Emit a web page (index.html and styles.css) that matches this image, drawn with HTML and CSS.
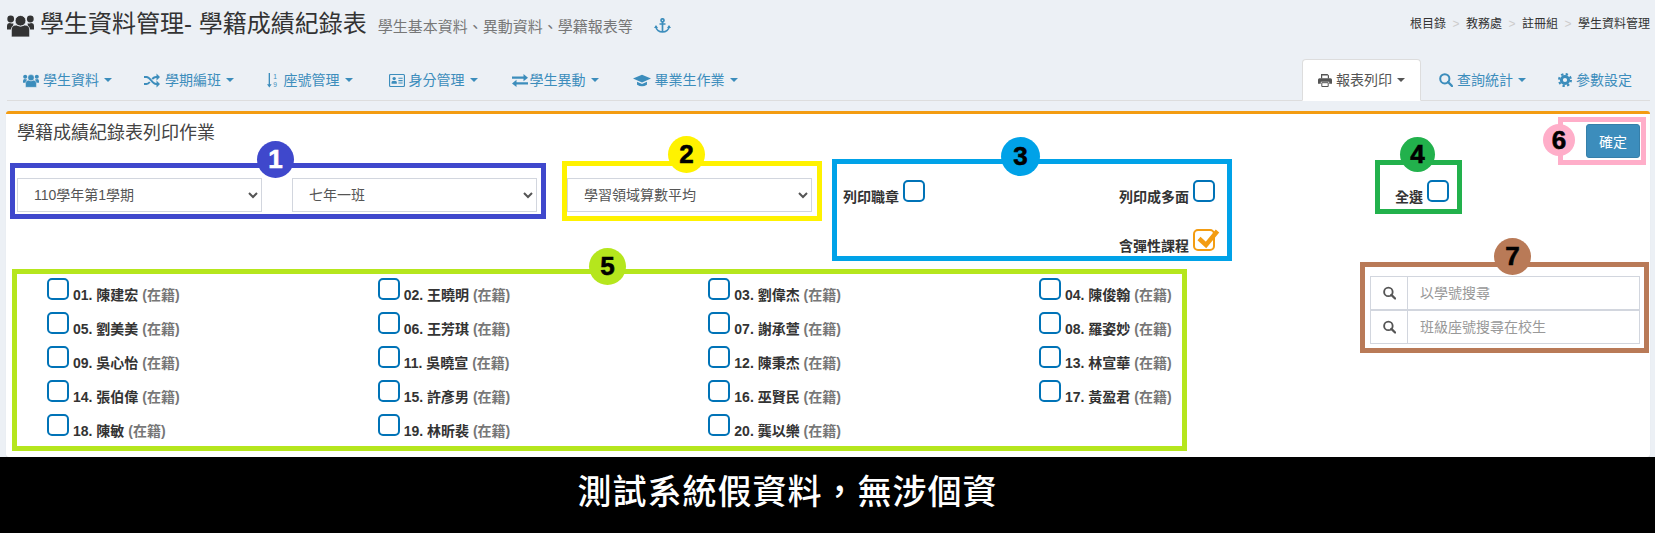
FILE: index.html
```html
<!DOCTYPE html>
<html lang="zh-Hant">
<head>
    <meta charset="UTF-8">
    <title>學生資料管理- 學籍成績紀錄表</title>
    <link rel="stylesheet" href="styles.css">
</head>
<body>
    <svg class="sprite" aria-hidden="true">
        <symbol id="i-users" viewBox="0 0 27 23">
            <circle cx="3.700" cy="5" r="3.400"/><circle cx="23.300" cy="5" r="3.400"/>
            <path d="M0 15.500v-3.300Q0 9 3 9q1.700.8 3.500.4Q6 11 6 13v2.500zM27 15.500v-3.300Q27 9 24 9q-1.700.8-3.500.4.500 1.600.500 3.600v2.500z"/>
            <g stroke="#ecf0f5" stroke-width=".8">
                <circle cx="13.500" cy="6.800" r="5.400"/>
                <path d="M4.300 23v-7q0-5 5-5 4.200 2.500 8.400 0 5 0 5 5v7z"/>
            </g>
        </symbol>
        <symbol id="i-random" viewBox="0 0 16 14">
            <path d="M0 3.500h2.500c4 0 5.500 7 9.500 7h1M0 10.500h2.500c1.500 0 2.500-1 3.300-2M8.200 5.500c1-1 2.200-2 3.800-2h1" fill="none" stroke="currentColor" stroke-width="2"/>
            <path d="M12.500 0l3.500 3.500-3.500 3.500zM12.500 7l3.500 3.500-3.500 3.500z"/>
        </symbol>
        <symbol id="i-sort" viewBox="0 0 14 18">
            <path d="M2.400 0h1.600v13.500h2L3.200 17.500.4 13.500h2z"/>
            <text x="8" y="7" class="sort-digit">1</text><text x="8" y="17" class="sort-digit">9</text>
        </symbol>
        <symbol id="i-card" viewBox="0 0 17 14">
            <rect x=".6" y=".6" width="15.800" height="12.800" rx="1" fill="none" stroke="currentColor" stroke-width="1.200"/>
            <circle cx="5.500" cy="5" r="1.800"/><path d="M2.700 10.500V9q0-1.500 1.500-1.500h2.600Q8.300 7.500 8.300 9v1.500z"/>
            <path d="M10 4h4.500v1.200H10zM10 6.500h4.500v1.200H10zM10 9h4.500v1.200H10z"/>
        </symbol>
        <symbol id="i-exchange" viewBox="0 0 16 14">
            <path d="M0 3h11.500V.5L16 4.200l-4.500 3.600V5.300H0zM16 8.700H4.500V6.200L0 9.900l4.500 3.600V11H16z"/>
        </symbol>
        <symbol id="i-cap" viewBox="0 0 20 15">
            <path d="M10 1l10 4.300L10 9.600 0 5.300z"/><path d="M4.500 9v3.200q5.500 3.600 11 0V9L10 11.400z"/>
        </symbol>
        <symbol id="i-print" viewBox="0 0 14 13">
            <path d="M3 5V.6h6.500L11 2v3H9.800V2H4.200v3z"/>
            <path d="M1.500 4.800h11Q14 4.800 14 6.300v4h-2.800V8.200H2.800v2.100H0v-4Q0 4.800 1.500 4.800z"/>
            <path d="M3.800 9.200h6.400V13H3.800z" fill="none" stroke="currentColor" stroke-width="1"/>
        </symbol>
        <symbol id="i-search" viewBox="0 0 14 14">
            <circle cx="5.800" cy="5.800" r="4.600" fill="none" stroke="currentColor" stroke-width="2"/>
            <path d="M9 9l4 4" fill="none" stroke="currentColor" stroke-width="2.400" stroke-linecap="round"/>
        </symbol>
        <symbol id="i-cog" viewBox="0 0 14 14">
            <circle cx="7" cy="7" r="3.600" fill="none" stroke="currentColor" stroke-width="3"/>
            <circle cx="7" cy="7" r="5.900" fill="none" stroke="currentColor" stroke-width="2.200" stroke-dasharray="2.300 2.330"/>
        </symbol>
        <symbol id="i-anchor" viewBox="0 0 17 15">
            <g fill="none" stroke="currentColor" stroke-width="1.700">
                <circle cx="8.500" cy="2.300" r="1.500"/><path d="M8.500 4v10M5.500 6h6M2 8.500c0 3.500 3.500 5.300 6.500 5.500 3-.2 6.500-2 6.500-5.500"/>
            </g>
            <path d="M0 10l2-3 2 3zM13 10l2-3 2 3z"/>
        </symbol>
    </svg>

    <div class="page">
        <header class="page-head">
            <h1 class="page-title">
                <svg class="title-icon"><use href="#i-users"/></svg>
                學生資料管理- 學籍成績紀錄表
                <small>學生基本資料、異動資料、學籍報表等</small>
                <svg class="anchor-icon"><use href="#i-anchor"/></svg>
            </h1>
            <ol class="breadcrumb">
                <li>根目錄</li>
                <li>教務處</li>
                <li>註冊組</li>
                <li>學生資料管理</li>
            </ol>
        </header>

        <nav class="tabs">
            <a class="tab"><svg class="ico"><use href="#i-users"/></svg>學生資料<i class="caret"></i></a>
            <a class="tab"><svg class="ico ico-random"><use href="#i-random"/></svg>學期編班<i class="caret"></i></a>
            <a class="tab"><svg class="ico ico-sort"><use href="#i-sort"/></svg>座號管理<i class="caret"></i></a>
            <a class="tab"><svg class="ico ico-card"><use href="#i-card"/></svg>身分管理<i class="caret"></i></a>
            <a class="tab"><svg class="ico ico-exchange"><use href="#i-exchange"/></svg>學生異動<i class="caret"></i></a>
            <a class="tab"><svg class="ico ico-cap"><use href="#i-cap"/></svg>畢業生作業<i class="caret"></i></a>
            <a class="tab tab-active"><svg class="ico ico-small"><use href="#i-print"/></svg>報表列印<i class="caret"></i></a>
            <a class="tab"><svg class="ico ico-small"><use href="#i-search"/></svg>查詢統計<i class="caret"></i></a>
            <a class="tab"><svg class="ico ico-small"><use href="#i-cog"/></svg>參數設定</a>
        </nav>

        <main class="panel">
            <div class="panel-head">
                <h3 class="panel-title">學籍成績紀錄表列印作業</h3>
                <button class="btn-ok">確定</button>
            </div>

            <div class="form-row">
                <select class="field">
                    <option>110學年第1學期</option>
                </select>
                <select class="field">
                    <option>七年一班</option>
                </select>
                <select class="field">
                    <option>學習領域算數平均</option>
                </select>

                <div class="options">
                    <label class="check-label"><span>列印職章</span><input type="checkbox" class="check"></label>
                    <label class="check-label opt-right"><span>列印成多面</span><input type="checkbox" class="check"></label>
                    <label class="check-label opt-third"><span>含彈性課程</span>
                        <span class="check-wrap">
                            <input type="checkbox" class="check check-orange" checked>
                            <svg class="tick" viewBox="0 0 28 22"><path d="M6 9.500l7 6.500L24.500 2"/></svg>
                        </span>
                    </label>
                </div>

                <label class="check-label select-all"><span>全選</span><input type="checkbox" class="check"></label>
            </div>

            <div class="bottom-row">
                <div class="students">
                    <label class="check-label"><input type="checkbox" class="check"><span>01. 陳建宏 <em>(在籍)</em></span></label>
                    <label class="check-label"><input type="checkbox" class="check"><span>02. 王曉明 <em>(在籍)</em></span></label>
                    <label class="check-label"><input type="checkbox" class="check"><span>03. 劉偉杰 <em>(在籍)</em></span></label>
                    <label class="check-label"><input type="checkbox" class="check"><span>04. 陳俊翰 <em>(在籍)</em></span></label>
                    <label class="check-label"><input type="checkbox" class="check"><span>05. 劉美美 <em>(在籍)</em></span></label>
                    <label class="check-label"><input type="checkbox" class="check"><span>06. 王芳琪 <em>(在籍)</em></span></label>
                    <label class="check-label"><input type="checkbox" class="check"><span>07. 謝承萱 <em>(在籍)</em></span></label>
                    <label class="check-label"><input type="checkbox" class="check"><span>08. 羅姿妙 <em>(在籍)</em></span></label>
                    <label class="check-label"><input type="checkbox" class="check"><span>09. 吳心怡 <em>(在籍)</em></span></label>
                    <label class="check-label"><input type="checkbox" class="check"><span>11. 吳曉宣 <em>(在籍)</em></span></label>
                    <label class="check-label"><input type="checkbox" class="check"><span>12. 陳秉杰 <em>(在籍)</em></span></label>
                    <label class="check-label"><input type="checkbox" class="check"><span>13. 林宣華 <em>(在籍)</em></span></label>
                    <label class="check-label"><input type="checkbox" class="check"><span>14. 張伯偉 <em>(在籍)</em></span></label>
                    <label class="check-label"><input type="checkbox" class="check"><span>15. 許彥男 <em>(在籍)</em></span></label>
                    <label class="check-label"><input type="checkbox" class="check"><span>16. 巫賢民 <em>(在籍)</em></span></label>
                    <label class="check-label"><input type="checkbox" class="check"><span>17. 黃盈君 <em>(在籍)</em></span></label>
                    <label class="check-label"><input type="checkbox" class="check"><span>18. 陳敏 <em>(在籍)</em></span></label>
                    <label class="check-label"><input type="checkbox" class="check"><span>19. 林昕裴 <em>(在籍)</em></span></label>
                    <label class="check-label"><input type="checkbox" class="check"><span>20. 龔以樂 <em>(在籍)</em></span></label>
                </div>

                <div class="search">
                    <div class="search-row">
                        <span class="search-addon"><svg><use href="#i-search"/></svg></span>
                        <input type="text" placeholder="以學號搜尋">
                    </div>
                    <div class="search-row">
                        <span class="search-addon"><svg><use href="#i-search"/></svg></span>
                        <input type="text" placeholder="班級座號搜尋在校生">
                    </div>
                </div>
            </div>
        </main>

        <footer class="notice">測試系統假資料，無涉個資</footer>

        <!-- 說明用的標註框 -->
        <div class="mark mark-1"></div><b class="badge badge-1">1</b>
        <div class="mark mark-2"></div><b class="badge badge-2">2</b>
        <div class="mark mark-3"></div><b class="badge badge-3">3</b>
        <div class="mark mark-4"></div><b class="badge badge-4">4</b>
        <div class="mark mark-5"></div><b class="badge badge-5">5</b>
        <div class="mark mark-6"></div><b class="badge badge-6">6</b>
        <div class="mark mark-7"></div><b class="badge badge-7">7</b>
    </div>
</body>
</html>
```

FILE: styles.css
```css
* {
    box-sizing: border-box;
}

body {
    margin: 0;
    font-family: "Liberation Sans", "Noto Sans CJK TC", sans-serif;
    font-size: 14px;
    color: #333;
    background-color: #ecf0f5;
}

.sprite {
    display: none;
}

.sort-digit {
    font-size: 8px;
    font-family: "Liberation Sans", sans-serif;
}

.page {
    position: relative;
    display: flex;
    flex-direction: column;
    height: 533px;
    overflow: hidden;
}

/* header */
.page-head {
    display: flex;
    justify-content: space-between;
    align-items: flex-start;
    height: 59px;
    padding: 9px 5px 0 7px;
}

.page-title {
    display: flex;
    align-items: baseline;
    margin: 0;
    font-size: 24px;
    font-weight: normal;
    line-height: 30px;
    white-space: nowrap;
}

.page-title small {
    margin-left: 11px;
    font-size: 15px;
    color: #777;
}

.title-icon {
    width: 27px;
    height: 23px;
    margin-right: 6px;
    fill: #333;
    align-self: center;
}

.anchor-icon {
    width: 17px;
    height: 15px;
    margin-left: 21px;
    fill: #3c8dbc;
    color: #3c8dbc;
    align-self: center;
}

.breadcrumb {
    display: flex;
    margin: 7px 0 0;
    padding: 0;
    list-style: none;
    font-size: 12px;
    line-height: 17px;
}

.breadcrumb li + li::before {
    content: ">";
    padding: 0 6.500px;
    color: #ccc;
}

/* tabs */
.tabs {
    display: flex;
    height: 42px;
    margin: 0 5px 10px 7px;
    border-bottom: 1px solid #ddd;
}

.tab {
    display: flex;
    align-items: center;
    height: 42px;
    padding: 10px 15px;
    border: 1px solid transparent;
    border-radius: 4px 4px 0 0;
    color: #3c8dbc;
    line-height: 20px;
}

.tab-active {
    margin: 0 2px 0 auto;
    background-color: #fff;
    border-color: #ddd #ddd #fff;
    color: #555;
}

.tab:last-child {
    margin-right: 2px;
}

.ico {
    width: 16px;
    height: 15px;
    margin-right: 4px;
    fill: currentColor;
}

.ico-random {
    margin-right: 5px;
}

.ico-sort {
    width: 13px;
    margin-right: 4.500px;
}

.ico-card {
    margin-left: 4px;
}

.ico-exchange {
    margin: 0 2px;
}

.ico-cap {
    width: 18px;
    margin: 0 4px 0 2px;
}

.ico-small {
    width: 14px;
    height: 14px;
}

.caret {
    width: 0;
    height: 0;
    margin-left: 5px;
    border-top: 4px solid currentColor;
    border-left: 4px solid transparent;
    border-right: 4px solid transparent;
}

/* panel */
.panel {
    flex: 1;
    margin: 0 5px 0 6px;
    background-color: #fff;
    border-top: 3px solid #f39c12;
    border-radius: 3px;
    box-shadow: 0 1px 1px rgba(0, 0, 0, 0.1);
}

.panel-head {
    display: flex;
    justify-content: space-between;
    align-items: flex-start;
    padding: 10px 10px 0 11px;
}

.panel-title {
    margin: -1px 0 0;
    font-size: 18px;
    font-weight: normal;
    line-height: 20px;
    color: #444;
}

.btn-ok {
    width: 54px;
    height: 34px;
    font: inherit;
    color: #fff;
    background-color: #3c8dbc;
    border: 1px solid #367fa9;
    border-radius: 3px;
}

.form-row {
    display: flex;
    align-items: flex-start;
    gap: 30px;
    margin-top: 20px;
    padding-left: 11px;
}

.field {
    width: 245px;
    height: 34px;
    padding: 6px 12px;
    font: inherit;
    color: #555;
    background-color: #fff;
    border: 1px solid #d2d6de;
    border-radius: 0;
}

.options {
    display: grid;
    grid-template-columns: 1fr 1fr;
    row-gap: 22px;
    width: 372px;
    margin: 2px 0 0 1px;
}

.opt-right,
.opt-third {
    justify-self: end;
}

.opt-third {
    grid-column: 2;
}

.select-all {
    margin: 2px 0 0 150px;
}

.check-label {
    display: flex;
    align-items: flex-start;
    gap: 4px;
    font-weight: bold;
    line-height: 20px;
    white-space: nowrap;
}

.check-label > span:not(.check-wrap) {
    margin-top: 7px;
}

.check {
    flex: none;
    width: 22px;
    height: 22px;
    margin: 0;
    appearance: none;
    background-color: #fff;
    border: 2px solid #0073b7;
    border-radius: 5px;
}

.check-orange {
    display: block;
    border-color: #f39c12;
}

.check-wrap {
    position: relative;
    flex: none;
    width: 22px;
    height: 22px;
}

.tick {
    position: absolute;
    left: 0;
    top: 0;
    width: 28px;
    height: 22px;
    fill: none;
    stroke: #f39c12;
    stroke-width: 4.500;
}

.bottom-row {
    display: flex;
    align-items: flex-start;
    margin-top: 22px;
    padding-left: 41px;
}

.students {
    display: grid;
    grid-template-columns: repeat(3, 330.67px) auto;
    grid-auto-rows: 34px;
}

.students em {
    font-style: normal;
    color: #777;
}

.search {
    width: 270px;
    margin: -2px 10px 0 auto;
}

.search-row {
    display: flex;
    height: 34px;
    border: 1px solid #d2d6de;
}

.search-addon {
    display: flex;
    justify-content: center;
    align-items: center;
    flex: none;
    width: 37px;
    color: #555;
    border-right: 1px solid #d2d6de;
}

.search-addon svg {
    width: 13px;
    height: 14px;
    fill: currentColor;
}

.search-row input {
    flex: 1;
    min-width: 0;
    padding: 6px 12px;
    font: inherit;
    border: 0;
}

.search-row input::placeholder {
    color: #999;
}

.notice {
    display: flex;
    justify-content: center;
    align-items: center;
    height: 76px;
    padding: 0 80px 12px 0;
    font-size: 34px;
    font-weight: 500;
    letter-spacing: 1px;
    color: #fff;
    background-color: #000;
}

/* annotation overlay */
.mark {
    position: absolute;
    border: 5px solid;
}

.mark-1 { left: 10px; top: 163px; width: 536px; height: 56px; border-color: #3f48cc; }
.mark-2 { left: 562px; top: 161px; width: 260px; height: 60px; border-color: #fff200; }
.mark-3 { left: 832px; top: 159px; width: 400px; height: 102px; border-color: #00a2e8; }
.mark-4 { left: 1375px; top: 160px; width: 87px; height: 54px; border-color: #22b14c; }
.mark-5 { left: 12px; top: 269px; width: 1175px; height: 182px; border-color: #b5e61d; }
.mark-6 { left: 1558px; top: 117px; width: 88px; height: 48px; border-color: #ffaec9; }
.mark-7 { left: 1360px; top: 262px; width: 289px; height: 91px; border-color: #b97a57; }

.badge {
    position: absolute;
    display: flex;
    justify-content: center;
    align-items: center;
    width: 37px;
    height: 37px;
    border-radius: 50%;
    font-size: 26px;
    color: #000;
    -webkit-text-stroke: 0.6px currentColor;
}

.badge-1 { left: 257px; top: 141px; background-color: #3f48cc; color: #fff; }
.badge-2 { left: 668px; top: 136px; background-color: #fff200; }
.badge-3 { left: 1001px; top: 137px; width: 39px; height: 39px; background-color: #00a2e8; }
.badge-4 { left: 1400px; top: 137px; width: 35px; height: 35px; background-color: #22b14c; }
.badge-5 { left: 589px; top: 248px; background-color: #b5e61d; }
.badge-6 { left: 1543px; top: 124px; width: 32px; height: 32px; background-color: #ffaec9; }
.badge-7 { left: 1494px; top: 238px; background-color: #b97a57; }
```
